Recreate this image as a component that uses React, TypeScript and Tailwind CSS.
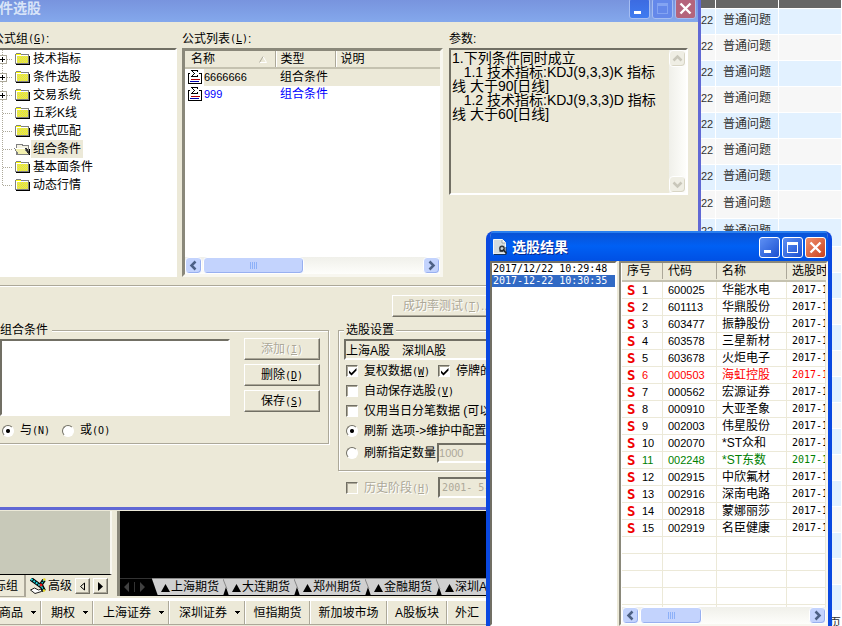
import type { ReactNode } from 'react';
import clsx from 'clsx';

type TreeNode = { name: string; expandable?: boolean; selected?: boolean };

const treeNodes: TreeNode[] = [
  { name: '技术指标', expandable: true },
  { name: '条件选股', expandable: true },
  { name: '交易系统', expandable: true },
  { name: '五彩K线' },
  { name: '模式匹配' },
  { name: '组合条件', selected: true },
  { name: '基本面条件' },
  { name: '动态行情' },
];

const stocks = [
  ['600025', '华能水电'],
  ['601113', '华鼎股份'],
  ['603477', '振静股份'],
  ['603578', '三星新材'],
  ['603678', '火炬电子'],
  ['000503', '海虹控股', 'text-[#ff0000]'],
  ['000562', '宏源证券'],
  ['000910', '大亚圣象'],
  ['002003', '伟星股份'],
  ['002070', '*ST众和'],
  ['002248', '*ST东数', 'text-[#008000]'],
  ['002915', '中欣氟材'],
  ['002916', '深南电路'],
  ['002918', '蒙娜丽莎'],
  ['002919', '名臣健康'],
];

const params = `1.下列条件同时成立
   1.1 技术指标:KDJ(9,3,3)K 指标
线 大于90[日线]
   1.2 技术指标:KDJ(9,3,3)D 指标
线 大于60[日线]`;

const marketTabs = ['上海期货', '大连期货', '郑州期货', '金融期货', '深圳A股'];

const sunken = 'border-2 border-t-[#716f64] border-l-[#716f64] border-r-white border-b-white';
const raised =
  'border border-t-white border-l-white border-r-[#716f64] border-b-[#716f64] bg-[#ece9d8] shadow-[inset_-1px_-1px_0_#aca899]';
const mono = 'font-["DejaVu_Sans_Mono",monospace] text-[10px]';
const disabledText = 'text-[#aca899] [text-shadow:1px_1px_0_#fff]';

function Key({ children }: { children: ReactNode }) {
  return (
    <span className={mono}>
      (<u>{children}</u>)
    </span>
  );
}

function Folder({ open }: { open?: boolean }) {
  return (
    <svg width="17" height="14" viewBox="0 0 17 14" shapeRendering="crispEdges" className="shrink-0">
      {open ? (
        <>
          <path d="M3 13h13V7h-1v5H3z" fill="#000" />
          <path d="M2.500 11V3l1-1h4l1 1h5l1 1v8H2.500z" fill="#f4f2e4" stroke="#808080" />
          <path d="M0.500 6.500h10l4 5.500H4z" fill="#f2f0b0" stroke="#808080" />
          <path d="M1 6.500h10" stroke="#fff" />
          <path d="M12 6l3 6" stroke="#333" strokeWidth="2" />
        </>
      ) : (
        <>
          <path d="M2 13h14V4h-2v8H2z" fill="#000" />
          <path d="M1.500 11.500V2.500l1-1h4l1 1h6.500V11.500z" fill="#ffff00" stroke="#808080" />
          {[4.5, 6.5, 8.5, 10.5].map((y) => (
            <path key={y} d={`M3 ${y}h11`} stroke="#cccc90" strokeDasharray="1 1" />
          ))}
          {[5.5, 7.5, 9.5].map((y) => (
            <path key={y} d={`M4 ${y}h10`} stroke="#cccc90" strokeDasharray="1 1" />
          ))}
          <path d="M2.500 11V3.500h11" fill="none" stroke="#fff" />
        </>
      )}
    </svg>
  );
}

function Branch({ expandable, last }: { expandable?: boolean; last?: boolean }) {
  return (
    <svg width="16" height="18" viewBox="0 0 16 18" shapeRendering="crispEdges" className="shrink-0">
      <path d={last ? 'M4.500 0v9' : 'M4.500 0v18'} stroke="#aca899" strokeDasharray="1 1" />
      <path d="M5 9.500h10" stroke="#aca899" strokeDasharray="1 1" />
      {expandable && (
        <>
          <path d="M0.500 5.500h8v8h-8z" fill="#fff" stroke="#aca899" />
          <path d="M2 9.500h5M4.500 7v5" stroke="#000" />
        </>
      )}
    </svg>
  );
}

function FormulaIcon() {
  return (
    <svg width="15" height="15" viewBox="0 0 15 15" shapeRendering="crispEdges" className="shrink-0">
      <path d="M0.500 3.500h13v10h-13z" fill="#fff" stroke="#000" />
      <path d="M2 0h9v6H2z" fill="#fff" />
      <path d="M9.500 2V0.500H3.500L6.500 3.500 3.500 6.500h6V5" fill="none" stroke="#000" />
      <path d="M3 9.500h9" stroke="#b00000" />
      <path d="M2 11.500h9" stroke="#0000b0" />
    </svg>
  );
}

function ScrollButton({ dir, disabled }: { dir: 'left' | 'right' | 'up' | 'down'; disabled?: boolean }) {
  const paths = {
    left: 'M9.500 3.500l-4 4 4 4',
    right: 'M5.500 3.500l4 4-4 4',
    up: 'M3.500 9.500l4-4 4 4',
    down: 'M3.500 5.500l4 4 4-4',
  };
  const labels = { left: '向左滚动', right: '向右滚动', up: '向上滚动', down: '向下滚动' };
  return (
    <button
      aria-label={labels[dir]}
      disabled={disabled}
      className={clsx(
        'h-[17px] w-[17px] shrink-0 rounded-sm border',
        disabled
          ? 'border-white bg-[#efeee4] shadow-[inset_-1px_-1px_0_#d8d5c4]'
          : 'border-white bg-[#c3d3fd] shadow-[inset_-1px_-1px_0_#98b0f0]',
      )}
    >
      <svg width="15" height="15" viewBox="0 0 15 15">
        <path d={paths[dir]} fill="none" stroke={disabled ? '#c9c7ba' : '#4d6185'} strokeWidth="2.500" />
      </svg>
    </button>
  );
}

function HScroll({ thumb }: { thumb: string }) {
  return (
    <div className="flex h-[17px] shrink-0 bg-linear-to-b from-[#f0f0ea] to-[#fefefb]">
      <ScrollButton dir="left" />
      <div className="flex flex-1 pl-px">
        <div
          className={clsx(
            'flex items-center justify-center gap-px rounded-sm border border-white bg-[#c3d3fd] shadow-[inset_-1px_-1px_0_#98b0f0]',
            thumb,
          )}
        >
          {[0, 1, 2, 3].map((i) => (
            <span key={i} className="h-[7px] w-px bg-[#8cb0f8]" />
          ))}
        </div>
      </div>
      <ScrollButton dir="right" />
    </div>
  );
}

function CheckField({ children, checked, disabled }: { children: ReactNode; checked?: boolean; disabled?: boolean }) {
  return (
    <label className={clsx('flex items-center gap-1.5 whitespace-nowrap', disabled && disabledText)}>
      <span className="grid place-items-center">
        <input
          type="checkbox"
          defaultChecked={checked}
          disabled={disabled}
          className="h-3 w-3 appearance-none border border-t-[#716f64] border-r-white border-b-white border-l-[#716f64] bg-white shadow-[inset_1px_1px_0_#aca899] [grid-area:1/1] disabled:bg-[#ece9d8]"
        />
        {checked && (
          <svg width="9" height="9" viewBox="0 0 9 9" className="pointer-events-none [grid-area:1/1]">
            <path d="M1 3.500v2.500l2.500 2.500L8.500 3.500V1L3.500 6z" fill="#000" />
          </svg>
        )}
      </span>
      <span>{children}</span>
    </label>
  );
}

function RadioField({ children, name, checked }: { children: ReactNode; name: string; checked?: boolean }) {
  return (
    <label className="flex items-center gap-1.5 whitespace-nowrap">
      <input
        type="radio"
        name={name}
        defaultChecked={checked}
        className="h-3 w-3 appearance-none rounded-full border border-t-[#716f64] border-r-white border-b-white border-l-[#716f64] bg-white checked:bg-[radial-gradient(circle,#000_1.5px,#fff_2.5px)]"
      />
      <span>{children}</span>
    </label>
  );
}

function CaptionButton({ kind, active }: { kind: 'min' | 'max' | 'close'; active?: boolean }) {
  const labels = { min: '最小化', max: '最大化', close: '关闭' };
  return (
    <button
      aria-label={labels[kind]}
      className={clsx(
        'grid h-[21px] w-[21px] place-items-center rounded-[3px] border',
        active && 'border-white',
        !active && 'border-[#a5bdf2]',
        kind === 'close' && (active ? 'bg-linear-to-br from-[#f0906c] to-[#c8401c]' : 'bg-[#b4647c]'),
        kind === 'min' && (active ? 'bg-linear-to-br from-[#5e90f4] to-[#1c4ed0]' : 'bg-linear-to-b from-[#3c6ae0] to-[#3f7bf0]'),
        kind === 'max' && (active ? 'bg-linear-to-br from-[#5e90f4] to-[#1c4ed0]' : 'bg-[#6488ea]'),
      )}
    >
      <svg width="19" height="19" viewBox="0 0 19 19" shapeRendering={kind === 'close' ? 'auto' : 'crispEdges'}>
        {kind === 'min' && <path d="M4 12h7v3H4z" fill="#fff" />}
        {kind === 'max' && (
          <path d="M4 4h11v11H4zM5 7v7h9V7z" fill={active ? '#fff' : '#84a4f2'} fillRule="evenodd" />
        )}
        {kind === 'close' && <path d="M4.500 4.500l10 10M14.500 4.500l-10 10" stroke="#fff" strokeWidth="2.400" />}
      </svg>
    </button>
  );
}

function PushButton({ children, disabled, className }: { children: ReactNode; disabled?: boolean; className?: string }) {
  return (
    <button
      disabled={disabled}
      className={clsx('h-[22px] leading-4 whitespace-nowrap', raised, disabled && disabledText, className)}
    >
      {children}
    </button>
  );
}

function FormulaTree() {
  return (
    <section className="flex w-[193px] flex-col">
      <h2 className="flex h-[26px] items-center pt-[7px] pl-2">
        公式组
        <Key>G</Key>:
      </h2>
      <ul className={clsx('flex-1 bg-white pl-3', sunken, 'border-t-[#8a887a]')}>
        {treeNodes.map((node, i) => (
          <li key={node.name} className="flex h-[18px] items-center">
            <Branch expandable={node.expandable} last={i === treeNodes.length - 1} />
            <Folder open={node.selected} />
            <span className={clsx('px-0.5 leading-[18px]', node.selected && 'bg-[#ece9d8]')}>{node.name}</span>
          </li>
        ))}
      </ul>
    </section>
  );
}

function FormulaList() {
  return (
    <section className="ml-[5px] flex w-[261px] flex-col">
      <h2 className="flex h-[26px] items-center pt-[7px]">
        公式列表
        <Key>L</Key>:
      </h2>
      <div className="flex flex-1 flex-col border-[3px] border-t-[#8a887a] border-r-[#f8f7f0] border-b-[#f8f7f0] border-l-[#8a887a] bg-white">
        <table className="w-full table-fixed border-collapse text-left">
          <thead>
            <tr className="h-4 border-b-2 border-[#c5c2b0] bg-[#ece9d8] leading-4">
              <th className="w-[91px] pl-1.5 font-normal">
                <span className="flex items-center justify-between border-r border-[#aca899] pr-2">
                  名称
                  <svg width="8" height="7" viewBox="0 0 8 7">
                    <path d="M4 0.500l3.500 6h-7" fill="none" stroke="#fff" />
                    <path d="M0.500 6.500L4 0.500" stroke="#aca899" />
                  </svg>
                </span>
              </th>
              <th className="w-[60px] border-l border-white pl-1 font-normal">
                <span className="block border-r border-[#aca899]">类型</span>
              </th>
              <th className="border-l border-white pl-1 font-normal">说明</th>
            </tr>
          </thead>
          <tbody>
            <tr className="h-[17px] leading-[17px]">
              <td className="pl-[3px]">
                <span className="flex items-center gap-px">
                  <FormulaIcon />
                  <span className="flex-1 bg-[#ece9d8] text-[11px]">6666666</span>
                </span>
              </td>
              <td className="bg-[#ece9d8] pl-1">组合条件</td>
              <td className="bg-[#ece9d8]" />
            </tr>
            <tr className="h-[17px] leading-[17px] text-[#0000ff]">
              <td className="pl-[3px]">
                <span className="flex items-center gap-px">
                  <FormulaIcon />
                  <span className="text-[11px]">999</span>
                </span>
              </td>
              <td className="pl-1">组合条件</td>
              <td />
            </tr>
          </tbody>
        </table>
        <div className="flex-1" />
        <HScroll thumb="w-[101px]" />
      </div>
    </section>
  );
}

function ParamPanel() {
  return (
    <section className="ml-1.5 flex flex-1 flex-col">
      <label htmlFor="params" className="flex h-[26px] items-center pt-[7px]">
        参数:
      </label>
      <div className={clsx('flex h-[147px]', sunken)}>
        <textarea
          id="params"
          readOnly
          value={params}
          className="min-w-0 flex-1 resize-none overflow-hidden pt-px pl-px text-[14px] leading-[14px] whitespace-pre outline-none"
        />
        <div className="flex w-[17px] flex-col justify-between bg-linear-to-r from-[#f0f0ea] to-[#fefefb]">
          <ScrollButton dir="up" disabled />
          <ScrollButton dir="down" disabled />
        </div>
      </div>
    </section>
  );
}

const groupBox = 'min-w-0 border border-[#aca899] shadow-[1px_1px_0_#fff,inset_1px_1px_0_#fff]';

function FormulaDialog() {
  return (
    <div className="absolute top-0 right-[141px] -left-4 border-r-[3px] border-b-[3px] border-[#6068d4] bg-[#ece9d8]">
      <header className="flex h-[22px] items-start justify-between overflow-hidden bg-linear-to-b from-[#7894de] to-[#84a8ec]">
        <h1 className="pl-[15px] text-[14px] leading-4 font-bold text-[#d8e4f8]">件选股</h1>
        <div className="-mt-0.5 flex gap-0.5 pr-0.5">
          <CaptionButton kind="min" />
          <CaptionButton kind="max" />
          <CaptionButton kind="close" />
        </div>
      </header>

      <div className="flex h-[255px] pr-[10px]">
        <FormulaTree />
        <FormulaList />
        <ParamPanel />
      </div>

      <div className="mt-2 border-t border-b border-t-[#aca899] border-b-white" />

      <div className="flex pt-2 pl-[408px]">
        <PushButton disabled className="w-[110px]">
          成功率测试
          <Key>T</Key>...
        </PushButton>
      </div>

      <div className="mt-[5px] flex items-start gap-[9px] pr-[10px] pb-[9px]">
        <fieldset className={clsx('w-[345px] shrink-0 pb-1 pl-[15px]', groupBox)}>
          <legend className="bg-[#ece9d8] pr-1 leading-4">组合条件</legend>
          <div className="flex gap-[14px]">
            <select multiple aria-label="组合条件" className={clsx('mt-px h-[77px] w-[230px] appearance-none bg-white', sunken)} />
            <div className="flex w-[76px] flex-col gap-1">
              <PushButton disabled>
                添加
                <Key>I</Key>
              </PushButton>
              <PushButton>
                删除
                <Key>D</Key>
              </PushButton>
              <PushButton>
                保存
                <Key>S</Key>
              </PushButton>
            </div>
          </div>
          <div className="mt-1.5 flex gap-3 pl-0.5 leading-4">
            <RadioField name="logic" checked>
              与<span className={mono}>(N)</span>
            </RadioField>
            <RadioField name="logic">
              或<span className={mono}>(O)</span>
            </RadioField>
          </div>
        </fieldset>

        <div className="min-w-0 flex-1">
          <fieldset className={clsx('w-full pr-1.5 pb-[5px] pl-[5px]', groupBox)}>
            <legend className="bg-[#ece9d8] px-0.5 leading-4">选股设置</legend>
            <input
              readOnly
              aria-label="选股范围"
              value="上海A股　深圳A股"
              className={clsx('mt-px mb-px block h-[21px] w-full bg-[#ece9d8] outline-none', sunken)}
            />
            <div className="flex h-5 items-center gap-2 pl-0.5">
              <CheckField checked>
                复权数据
                <Key>W</Key>
              </CheckField>
              <CheckField checked>停牌的</CheckField>
            </div>
            <div className="flex h-5 items-center pl-0.5">
              <CheckField>
                自动保存选股
                <Key>V</Key>
              </CheckField>
            </div>
            <div className="flex h-5 items-center pl-0.5">
              <CheckField>仅用当日分笔数据 (可以</CheckField>
            </div>
            <div className="flex h-5 items-center pl-0.5">
              <RadioField name="refresh" checked>
                刷新 选项-&gt;维护中配置
              </RadioField>
            </div>
            <div className="flex h-6 items-center gap-px pl-0.5">
              <RadioField name="refresh">刷新指定数量</RadioField>
              <input
                disabled
                aria-label="刷新数量"
                defaultValue="1000"
                className={clsx('h-5 w-24 bg-[#ece9d8] text-[11px] text-[#aca899]', sunken)}
              />
            </div>
          </fieldset>
          <div className="mt-1.5 flex items-center gap-2 pl-2">
            <CheckField disabled>
              历史阶段
              <Key>H</Key>
            </CheckField>
            <input
              disabled
              aria-label="历史阶段起始日期"
              defaultValue="2001- 5-"
              className={clsx('h-[21px] w-24 bg-[#ece9d8] pl-0.5 text-[#aca899]', mono, sunken)}
            />
          </div>
        </div>
      </div>
    </div>
  );
}

const resultCell = 'overflow-hidden border-r border-b border-[#ece9d8] p-0 pl-[5px] whitespace-nowrap';
const resultHead = 'border-b-2 border-[#c5c2b0] pb-px pl-[5px] font-normal';

function ResultTable() {
  return (
    <div className="flex min-w-0 flex-1 flex-col border-2 border-t-[#8a887a] border-r-[#f8f7f0] border-b-[#f8f7f0] border-l-[#8a887a] bg-white pl-px">
      <div className="min-h-0 flex-1 overflow-hidden">
        <table className="w-full table-fixed border-separate border-spacing-0 text-left">
          <thead>
            <tr className="h-[19px] bg-[#ece9d8] leading-4">
              <th className={clsx(resultHead, 'w-[41px]')}>
                <span className="block border-r border-[#aca899]">序号</span>
              </th>
              <th className={clsx(resultHead, 'w-[54px]')}>
                <span className="block border-r border-[#aca899]">代码</span>
              </th>
              <th className={clsx(resultHead, 'w-[70px]')}>
                <span className="block border-r border-[#aca899]">名称</span>
              </th>
              <th className={clsx(resultHead, 'overflow-hidden whitespace-nowrap')}>选股时</th>
            </tr>
          </thead>
          <tbody>
            {stocks.map(([code, name, color], i) => (
              <tr key={code} className={clsx('h-[17px] leading-4', color)}>
                <td className={resultCell}>
                  <span className="flex items-center">
                    <b className="w-[15px] font-['DejaVu_Sans_Mono',monospace] text-[14px] leading-4 text-[#f00000]">S</b>
                    <span className="text-[11px]">{i + 1}</span>
                  </span>
                </td>
                <td className={clsx(resultCell, 'text-[11px]')}>{code}</td>
                <td className={resultCell}>{name}</td>
                <td className={clsx(resultCell, mono)}>2017-1</td>
              </tr>
            ))}
            {[0, 1, 2, 3, 4].map((i) => (
              <tr key={i} className="h-[17px]">
                <td className={resultCell} />
                <td className={resultCell} />
                <td className={resultCell} />
                <td className={resultCell} />
              </tr>
            ))}
          </tbody>
        </table>
      </div>
      <HScroll thumb="w-[62px]" />
    </div>
  );
}

function ResultWindow() {
  return (
    <div className="absolute top-[231px] right-[10px] bottom-0 flex w-[346px] flex-col overflow-hidden rounded-t-lg border-x-4 border-[#0a48e0] bg-[#ece9d8]">
      <header className="-mx-1 flex h-[30px] shrink-0 items-center justify-between bg-linear-to-b from-[#0a50d0] via-[#0060f4] to-[#0050e4] pt-0.5 pr-1.5 pl-[7px] shadow-[inset_0_2px_0_#2a80f0]">
        <div className="flex items-center gap-1">
          <svg width="15" height="16" viewBox="0 0 15 16">
            <path d="M0.500 0.500h9l3 3V15h-12z" fill="#d4dcde" stroke="#f4f8f8" />
            <path d="M1 15.500h12V8" fill="none" stroke="#103060" />
            <path d="M9 1v3h3.500" fill="#fff" stroke="#889498" strokeWidth="0.800" />
            <circle cx="9" cy="9.500" r="2.200" fill="#c8d2d4" stroke="#30363c" strokeWidth="1.400" />
            <path d="M6.500 12h3l1-1 3 3.500" fill="none" stroke="#22282e" strokeWidth="1.600" />
          </svg>
          <h1 className="text-[14px] leading-5 font-bold text-white [text-shadow:1px_1px_0_#0a2a90]">选股结果</h1>
        </div>
        <div className="flex gap-0.5">
          <CaptionButton kind="min" active />
          <CaptionButton kind="max" active />
          <CaptionButton kind="close" active />
        </div>
      </header>
      <div className="flex min-h-0 flex-1 gap-0.5">
        <ul className={clsx('w-[127px] bg-white leading-3 whitespace-nowrap', mono, sunken)}>
          <li className="pl-px leading-3">2017/12/22 10:29:48</li>
          <li className="bg-[#316ac5] pl-px leading-3 text-white">2017-12-22 10:30:35</li>
        </ul>
        <ResultTable />
      </div>
    </div>
  );
}

function IssueTable() {
  const issues = Array.from({ length: 23 }, (_, i) => i);
  return (
    <div className="flex w-[141px] shrink-0 flex-col overflow-hidden bg-white pr-px text-[#333333]">
      <table className="w-full table-fixed border-separate border-spacing-0">
        <thead>
          <tr className="h-[9px] bg-[#666666]">
            <th className="w-[15px] border-r border-b border-white p-0" />
            <th className="w-[63px] border-r border-b border-white p-0" />
            <th className="border-b border-white p-0" />
          </tr>
        </thead>
        <tbody>
          {issues.map((i) => (
            <tr key={i} className={clsx(i === 7 || i === 8 ? 'h-[28px]' : 'h-[26px]', i % 2 ? 'bg-[#f7f7f7]' : 'bg-[#e2f1ff]')}>
              <td className="border-r border-b border-white p-0 pb-1 text-[11px] leading-4">{i < 9 && '22'}</td>
              <td className="border-r border-b border-white p-0 pb-1 pl-[7px] leading-4">{i < 9 && '普通问题'}</td>
              <td className="border-b border-white p-0" />
            </tr>
          ))}
        </tbody>
      </table>
      <p className="pt-1.5 text-right leading-3">页</p>
    </div>
  );
}

function MenuItem({ children, className, arrow }: { children: ReactNode; className: string; arrow?: boolean }) {
  return (
    <button
      className={clsx(
        'flex h-[23px] shrink-0 items-center border-r border-l border-r-[#aca899] border-l-white whitespace-nowrap',
        arrow ? 'justify-between pr-1 pl-[9px]' : 'justify-center',
        className,
      )}
    >
      {children}
      {arrow && (
        <svg width="5" height="3" viewBox="0 0 5 3" shapeRendering="crispEdges">
          <path d="M0 0h5L2.500 3z" fill="#000" />
        </svg>
      )}
    </button>
  );
}

function TradingApp() {
  return (
    <div className="flex min-w-0 flex-1 flex-col justify-end overflow-hidden bg-[#ece9d8] pb-px">
      <div className="flex h-[87px]">
        <div className="flex w-[117px] shrink-0 flex-col">
          <div className="mr-[5px] h-[64px] border-r-2 border-b border-r-[#f8f7f0] border-b-black bg-[#c8c9b9]" />
          <div className="flex h-[22px] items-center">
            <button className="-ml-[6px] h-full border-r-2 border-b border-[#aca899] pr-1.5 whitespace-nowrap">标组</button>
            <button className="ml-1 flex items-center gap-0.5 whitespace-nowrap">
              <svg width="16" height="16" viewBox="0 0 16 16">
                <path d="M0.500 12l4-2 4 2 4-1.500-1 3L5 15.500z" fill="#fff" stroke="#222" />
                <path d="M1 1l11 8M14 2l-4 6M11 7l3 6" stroke="#000" strokeWidth="4" />
                <path d="M1 1l11 8" stroke="#20d8e0" strokeWidth="2" strokeDasharray="2 1" />
                <path d="M14 2l-4 6M11 7l3 6" stroke="#20d8e0" strokeWidth="1.500" strokeDasharray="1.500 1" />
                <circle cx="11" cy="7" r="1.500" fill="#e81010" />
                <circle cx="14.300" cy="1.500" r="1.300" fill="#e8d820" />
                <circle cx="14" cy="12.500" r="1.200" fill="#e8d820" />
              </svg>
              高级
            </button>
            <button aria-label="上一页" className={clsx('ml-[3px] grid h-4 w-[15px] place-items-center', raised)}>
              <svg width="7" height="9" viewBox="0 0 7 9">
                <path d="M5.500 1v7L1.500 4.500z" fill="none" stroke="#000" />
              </svg>
            </button>
            <button aria-label="下一页" className={clsx('ml-[3px] grid h-4 w-[15px] place-items-center', raised)}>
              <svg width="7" height="9" viewBox="0 0 7 9">
                <path d="M1 0v9l5-4.500z" fill="#000" />
              </svg>
            </button>
          </div>
        </div>
        <div className="mb-0.5 flex min-w-0 flex-1 flex-col justify-end border-l-[3px] border-[#8a887a] bg-black">
          <div className="flex h-[18px] border-b border-black bg-[#d0d0d0]">
            <div className="flex w-8 shrink-0 items-center justify-around border-t border-[#333] bg-black">
              <svg width="28" height="10" viewBox="0 0 28 10">
                <path d="M7 0v10L2 5zM18 0v10l5-5z" fill="#404040" />
                <path d="M12.500 0v10" stroke="#333" />
              </svg>
            </div>
            {marketTabs.map((tab, i) => (
              <button key={tab} className="flex w-[71px] shrink-0 items-center border-t border-[#888] whitespace-nowrap">
                <svg width="9" height="17" viewBox="0 0 9 17" className="shrink-0">
                  {i === 0 ? (
                    <path d="M0 0l6 17H0z" fill="#000" />
                  ) : (
                    <>
                      <path d="M3 8l3 9H0z" fill="#000" />
                      <path d="M0 0l4 10" stroke="#888" />
                    </>
                  )}
                </svg>
                <svg width="9" height="8" viewBox="0 0 9 8" className="mt-0.5 shrink-0">
                  <path d="M4.500 0L9 8H0z" fill="#000" />
                </svg>
                <span className="pl-px leading-4">{tab}</span>
              </button>
            ))}
          </div>
        </div>
      </div>
      <nav className="flex items-center border-t-[3px] border-b border-t-white border-b-[#aca899]">
        <MenuItem arrow className="-ml-[11px] w-[52px]">
          商品
        </MenuItem>
        <MenuItem arrow className="w-[52px]">
          期权
        </MenuItem>
        <MenuItem arrow className="w-[76px]">
          上海证券
        </MenuItem>
        <MenuItem arrow className="w-[76px]">
          深圳证券
        </MenuItem>
        <MenuItem className="w-[65px]">恒指期货</MenuItem>
        <MenuItem className="w-[77px]">新加坡市场</MenuItem>
        <MenuItem className="w-[60px]">A股板块</MenuItem>
        <MenuItem className="w-[40px]">外汇</MenuItem>
      </nav>
    </div>
  );
}

export default function App() {
  return (
    <main className="relative h-screen overflow-hidden bg-white font-['Liberation_Sans','Noto_Sans_CJK_SC',sans-serif] text-xs text-black">
      <div className="flex h-full">
        <TradingApp />
        <IssueTable />
      </div>
      <FormulaDialog />
      <ResultWindow />
    </main>
  );
}
